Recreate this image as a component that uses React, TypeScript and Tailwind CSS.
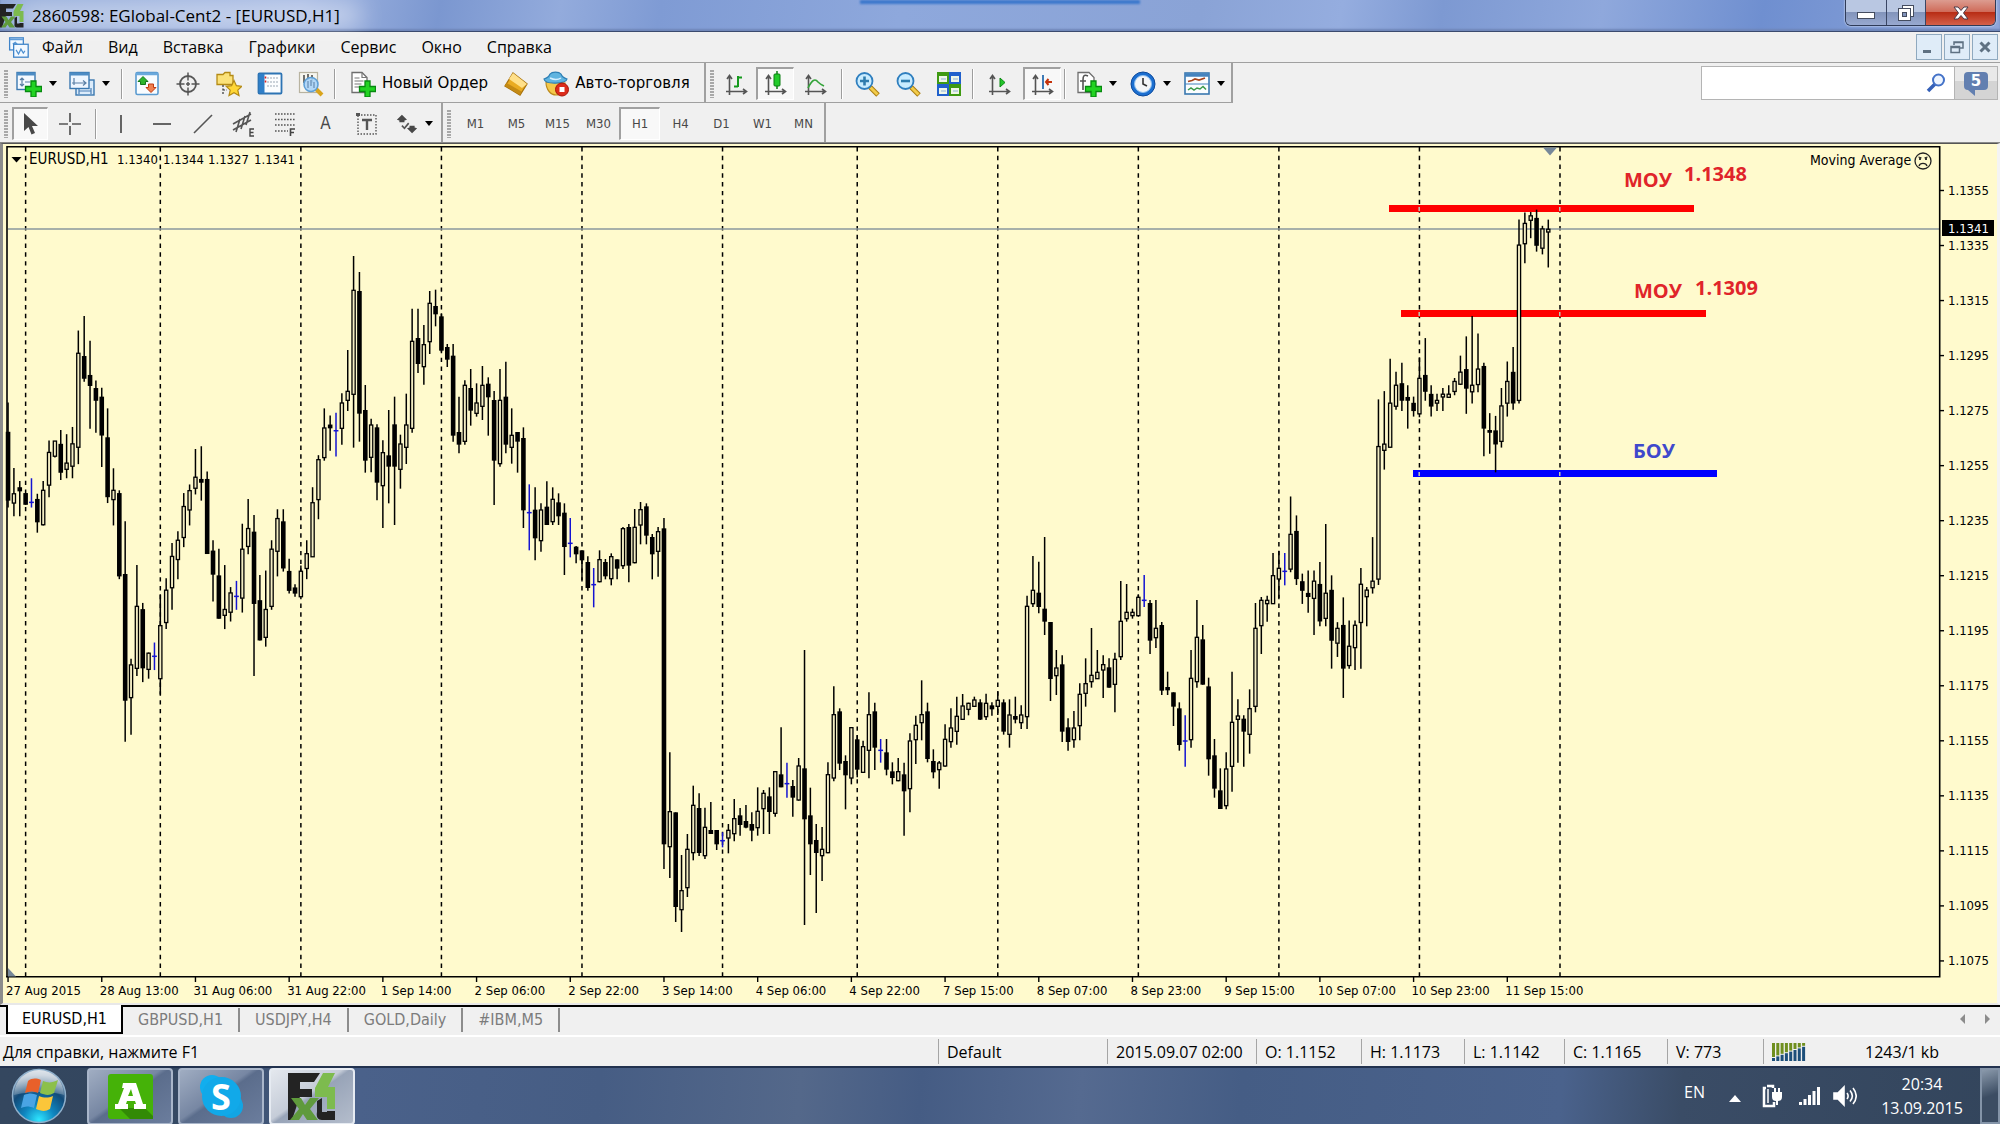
import type { ReactNode } from "react";

const COND = "font-['DejaVu_Sans_Condensed','DejaVu_Sans',sans-serif]";
const UI = "font-['Open_Sans','Noto_Sans',sans-serif]";

/* ------------------------------------------------------------------ */
/* Chart data                                                          */
/* ------------------------------------------------------------------ */

type Segment = { first: number; top: number; unit: number; bars: string };

// Each bar: kind bodyTop bodyBottom high low  (w = rising, b = falling, d = doji)
const SEGMENTS: Segment[] = [
  {
    first: 0,
    top: 220,
    unit: 2.904,
    bars: `b 615 815 530 835|w 795 822 720 860|b 776 788 758 860|b 793 827 793 827|d 820 820 750 835|b 810 878 795 908|w 785 885 758 887|w 675 770 640 805|w 642 686 642 690|b 650 734 610 755|w 706 724 622 750|w 650 715 601 750|w 387 660 321 709|b 395 461 279 470|b 450 482 351 606|b 488 525 466 618|b 513 626 487 717|b 631 805 547 822|w 785 812 721 887|b 793 1035 785 1043|b 1028 1396 875 1515|w 1292 1387 1274 1495|w 1122 1302 1002 1324|b 1130 1302 1112 1342|w 1258 1305 1256 1332|d 1267 1267 1227 1307|w 1178 1332 1087 1378|w 1075 1169 1040 1188|w 977 1068 938 1132|w 930 986 904 1043|w 832 922 793 950|w 786 842 768 887|w 747 779 665 797|b 752 763 657 815|b 752 970 730 970|b 960 1030 930 1108|b 1032 1158 955 1158|w 1131 1148 1002 1188|w 1083 1139 1066 1166|d 1093 1093 1048 1132|w 956 1098 882 1140|w 896 948 810 971|b 905 1115 857 1324|b 1104 1221 1031 1221|w 1131 1212 1018 1239|w 956 1122 930 1132|w 867 962 840 1035|b 875 1012 840 1021|b 1019 1077 984 1085|b 1067 1085 1058 1094|w 1020 1094 1003 1094|w 969 1012 930 1043|w 821 978 776 978|w 696 812 683 869|w 604 690 547 699|b 594 605 568 670|d 612 612 560 687`,
  },
  {
    first: 57,
    top: 220,
    unit: 3,
    bars: `w 549 625 520 674|w 514 541 390 573|w 211 523 108 683|b 213 581 156 665|b 570 722 495 758|w 615 712 596 757|b 622 788 613 841|w 698 797 661 924|b 706 740 570 850|b 613 740 530 915|w 672 748 644 806|w 615 682 521 732|w 364 625 266 638|b 354 432 266 459|w 374 440 315 494|w 250 365 213 402|b 258 283 209 319|b 289 392 280 395|b 381 419 372 441|b 407 647 372 665|b 636 674 530 700|w 496 664 481 674|b 504 572 447 617|w 549 580 490 590|w 496 559 438 600|b 491 532 472 647|b 540 722 513 855|w 541 731 447 740|b 530 674 425 700|w 646 682 565 731|b 636 665 636 758|b 654 871 622 924|d 878 878 793 991|b 869 955 802 1021|w 870 962 850 995|b 860 915 784 915|w 838 905 802 915|b 847 889 820 915|b 878 981 850 1065|d 970 970 894 1012|b 980 1003 978 1030|b 991 1021 991 1080|b 1026 1104 1009 1112|d 1094 1094 1044 1162`,
  },
  {
    first: 101,
    top: 440,
    unit: 3,
    bars: `w 359 425 331 427|b 366 409 357 418|w 350 416 340 436|b 358 386 358 418|w 266 377 261 387|b 261 377 252 427|w 262 368 207 370|w 209 255 186 313|b 199 287 190 313|b 291 343 282 418|w 275 334 261 410|b 265 1213 234 1287|w 1115 1220 937 1314|b 1117 1401 1117 1446|w 1352 1409 1245 1476|w 1228 1343 1182 1371|w 1096 1238 1037 1261|b 1104 1239 1060 1248|w 1162 1247 1103 1257|b 1170 1182 1086 1182|b 1170 1213 1170 1230|d 1202 1202 1177 1222|w 1171 1194 1152 1240|w 1136 1181 1077 1204|b 1126 1155 1104 1187|b 1143 1163 1095 1165|b 1152 1172 1117 1204|w 1114 1163 1042 1187|w 1060 1106 1050 1182|b 1069 1116 1042 1182|w 995 1120 993 1130|b 1003 1042 862 1042|d 1031 1031 968 1073|b 1038 1073 1020 1130|w 978 1080 954 1082|b 985 1138 630 1455|b 1126 1213 1043 1305|b 1200 1239 1152 1419|w 1228 1247 1161 1323|w 1004 1238 967 1240|w 824 1014 739 1024|b 814 971 805 990|b 963 1006 946 1108|w 863 1014 862 1033|b 898 989 885 1012|w 920 997 902 998|w 824 931 757 1015|b 814 923 788 990|d 931 931 897 968|b 937 989 897 1006|b 994 1014 967 1033|w 995 1022 954 1024|b 1003 1054 968 1187|w 903 1046 880 1117|w 856 899 827 972|w 824 848 721 901|b 814 957 788 967|b 963 997 928 1015|w 969 989 963 1046|w 898 978 853 980|w 864 905 805 923|w 829 874 770 914|w 798 838 762 839|w 790 808 788 826|w 780 799 770 801`,
  },
  {
    first: 166,
    top: 500,
    unit: 3,
    bars: `b 607 659 598 660|w 610 650 581 660|b 616 628 607 647|w 601 619 574 645|b 607 695 598 704|w 645 703 598 743|b 648 659 590 670|w 645 668 616 687|w 319 650 287 687|w 271 311 168 321|b 278 321 185 340|b 326 365 111 405|b 366 537 366 603|w 504 527 450 585|b 493 695 466 726|b 682 726 655 752|w 684 719 633 743|w 583 677 550 721|w 551 580 475 620|w 526 545 384 563|w 517 536 450 537|w 494 510 466 594|b 502 563 475 563|w 478 553 458 637|w 364 470 243 480|w 337 356 252 365|w 337 347 326 356|w 292 347 283 347|d 301 301 225 321|b 309 422 300 462|w 385 413 300 444|b 375 572 366 585|b 561 571 515 585|b 577 620 577 678|b 625 735 607 752|d 723 723 646 800|w 535 719 450 743|w 412 545 300 563|b 418 554 375 554|b 559 778 533 827|b 766 866 717 893|b 871 927 805 927|w 807 917 757 928|w 667 799 515 875|w 648 658 598 788|b 656 695 646 800|w 626 703 568 761|w 385 619 309 637|w 301 377 291 462|w 301 311 287 365|w 227 311 159 312|w 205 237 152 294|d 214 214 159 256`,
  },
  {
    first: 219,
    top: 190,
    unit: 2.904,
    bars: `w 1000 1101 890 1110|b 990 1130 945 1147|b 1136 1164 1114 1202|b 1170 1182 1105 1228|w 1136 1186 1105 1292|b 1144 1253 1080 1267|w 1171 1244 970 1267|b 1161 1309 1119 1390|w 1273 1316 1255 1356|b 1263 1390 1183 1475|w 1325 1381 1250 1390|w 1264 1329 1250 1394|w 1145 1256 1098 1390|w 1162 1181 1153 1267|w 1136 1155 1008 1172|w 745 1130 608 1147|w 738 756 584 812|w 619 747 490 748|w 567 628 528 638|b 561 612 502 642|b 601 612 567 693|b 618 642 600 658|w 547 650 486 660|b 537 586 430 612|b 592 629 567 658|w 611 619 592 642|w 593 601 575 642|w 593 602 567 603|w 556 585 546 596|w 529 564 481 566|b 520 577 425 650|w 567 586 366 620|w 520 565 417 587|b 511 693 502 773|b 697 705 648 766|b 698 739 656 820|w 627 730 575 748|w 556 619 498 658|b 528 620 456 638|w 160 611 86 620|w 97 156 65 213|w 75 88 64 140|b 81 162 57 179|w 113 169 104 187|w 114 122 86 225`,
  },
];

const PX = 1.4641;
const barX = (k: number) => (5.5 + 4 * k) * PX;

const BARS = SEGMENTS.flatMap((s) =>
  s.bars.split("|").map((row, i) => {
    const [kind, a, b, h, l] = row.trim().split(" ");
    const y = (v: string) => s.top + Number(v) / s.unit;
    return { kind, x: barX(s.first + i), t: y(a), b: y(b), h: y(h), l: y(l) };
  }),
);

const DAY_BARS = [3, 26, 50, 74, 98, 122, 145, 169, 193, 217, 241, 265];

const DATES = [
  "27 Aug 2015", "28 Aug 13:00", "31 Aug 06:00", "31 Aug 22:00", "1 Sep 14:00", "2 Sep 06:00",
  "2 Sep 22:00", "3 Sep 14:00", "4 Sep 06:00", "4 Sep 22:00", "7 Sep 15:00", "8 Sep 07:00",
  "8 Sep 23:00", "9 Sep 15:00", "10 Sep 07:00", "10 Sep 23:00", "11 Sep 15:00",
];

const PRICES = [
  "1.1355", "1.1335", "1.1315", "1.1295", "1.1275", "1.1255", "1.1235", "1.1215",
  "1.1195", "1.1175", "1.1155", "1.1135", "1.1115", "1.1095", "1.1075",
];

const LEVELS = [
  { x1: 1389, x2: 1694, y: 205, color: "#ff0000" },
  { x1: 1401, x2: 1706, y: 310, color: "#ff0000" },
  { x1: 1413, x2: 1717, y: 470, color: "#0000ff" },
];

function Chart() {
  return (
    <svg viewBox="3 144 1994 859" className={`block h-auto w-full bg-[#fffacd] text-[13px] ${COND}`} role="img" aria-label="EURUSD,H1">
      {DAY_BARS.map((k) => (
        <line key={k} x1={barX(k)} x2={barX(k)} y1={147} y2={976} stroke="#000" strokeWidth={1.5} strokeDasharray="4.39 4.39" />
      ))}
      <line x1={8} x2={1940} y1={229} y2={229} stroke="#8a979c" strokeWidth={1.6} />
      {LEVELS.map((l) => (
        <g key={l.y}>
          <rect x={l.x1} y={l.y} width={l.x2 - l.x1} height={7} fill={l.color} />
          {DAY_BARS.map(barX)
            .filter((x) => x > l.x1 && x < l.x2)
            .map((x) => (
              <rect key={x} x={x - 1} y={l.y + 2} width={1.5} height={4} fill="#bfc4b4" />
            ))}
        </g>
      ))}
      {BARS.map((c) => {
        const color = c.kind === "d" ? "#1414d2" : "#000";
        return (
          <g key={c.x}>
            <line x1={c.x} x2={c.x} y1={c.h} y2={c.l} stroke={color} strokeWidth={1.5} />
            {c.kind === "d" && <line x1={c.x - 2.4} x2={c.x + 2.4} y1={c.t} y2={c.t} stroke={color} strokeWidth={1.5} />}
            {c.kind === "b" && <rect x={c.x - 2.3} y={c.t} width={4.6} height={Math.max(c.b - c.t, 2)} fill="#000" />}
            {c.kind === "w" && (
              <rect x={c.x - 1.6} y={c.t} width={3.2} height={Math.max(c.b - c.t, 2)} fill="#f3edc3" stroke="#000" strokeWidth={1.3} />
            )}
          </g>
        );
      })}
      <path d="M7 977V146.7H1939.7V976.7H6" fill="none" stroke="#000" strokeWidth={1.6} />
      <path d="M1543 147.500h14l-7 8z" fill="#778899" />
      <path d="M8 968v8.500h8z" fill="#778899" />
      <path d="M11.500 157h10l-5 5.500z" fill="#000" />
      <text x={29} y={164} className="text-[15px]">EURUSD,H1</text>
      <text x={117} y={164}>1.1340</text>
      <text x={163} y={164}>1.1344</text>
      <text x={208} y={164}>1.1327</text>
      <text x={254} y={164}>1.1341</text>
      <text x={1810} y={165} className="text-[14px]">Moving Average</text>
      <g fill="none" stroke="#222" strokeWidth={1.3}>
        <circle cx={1923} cy={161} r={8} />
        <path d="M1919 166c1-3.500 7-3.500 8 0M1918.500 157l3 1M1927.500 157l-3 1" />
        <path d="M1920 158v2M1926 158v2" strokeWidth={1.8} />
      </g>
      <g className="font-['Open_Sans'] text-[20px] font-bold" fill="#e0242a">
        <text x={1624} y={187}>МОУ</text>
        <text x={1684} y={181}>1.1348</text>
        <text x={1634} y={298}>МОУ</text>
        <text x={1695} y={295}>1.1309</text>
        <text x={1633} y={458} fill="#3f48cc">БОУ</text>
      </g>
      {PRICES.map((p, i) => (
        <g key={p}>
          <line x1={1940} x2={1944} y1={190.5 + i * 55.03} y2={190.5 + i * 55.03} stroke="#000" strokeWidth={1.4} />
          <text x={1948} y={195 + i * 55.03}>{p}</text>
        </g>
      ))}
      <rect x={1942} y={220} width={52} height={16} fill="#000" />
      <text x={1948} y={233} fill="#fff">1.1341</text>
      {DATES.map((d, i) => (
        <g key={d}>
          <line x1={barX(i * 16)} x2={barX(i * 16)} y1={977} y2={982} stroke="#000" strokeWidth={1.4} />
          <text x={barX(i * 16) - 2} y={995}>{d}</text>
        </g>
      ))}
    </svg>
  );
}

/* ------------------------------------------------------------------ */
/* Icons                                                               */
/* ------------------------------------------------------------------ */

function Ico({ children, size = "size-[26px]", box = "0 0 26 26" }: { children: ReactNode; size?: string; box?: string }) {
  return (
    <svg viewBox={box} className={`${size} shrink-0`} fill="none" aria-hidden="true">
      {children}
    </svg>
  );
}

const PLUS = "M15 10h5v5.500h5.500v5h-5.500v5.500h-5v-5.500h-5.500v-5h5.500z";
const Plus = () => <path d={PLUS} fill="#22d322" stroke="#078a10" strokeWidth="1.3" />;

const NewChart = () => (
  <Ico>
    <rect x="1" y="1.500" width="18" height="17" fill="#f4f9ff" stroke="#3a78b0" strokeWidth="1.4" />
    <path d="M1 3h18" stroke="#4d8cc4" strokeWidth="3" />
    <path d="M6 7v8M4 9l2-2 2 2M4 13l2 2 2-2M9 11h5" stroke="#5a7fa5" strokeWidth="1.2" />
    <Plus />
  </Ico>
);
const Profiles = () => (
  <Ico>
    <rect x="7" y="9" width="18" height="15" fill="#dcecfb" stroke="#3a78b0" strokeWidth="1.4" />
    <path d="M10 20h12M10 17v6M22 17l0 6" stroke="#4a7fb5" strokeWidth="1.2" />
    <rect x="1" y="1.500" width="19" height="16" fill="#eef6ff" stroke="#3a78b0" strokeWidth="1.4" />
    <path d="M1 3h19" stroke="#4d8cc4" strokeWidth="3" />
    <path d="M5 7v7M3 12h14M14 9.500l3 2.500-3 2.500" stroke="#5a7fa5" strokeWidth="1.2" />
  </Ico>
);
const MarketWatch = () => (
  <Ico>
    <rect x="2" y="1.500" width="22" height="22" rx="1.500" fill="#f8fcff" stroke="#5b9bd0" strokeWidth="1.6" />
    <path d="M2 3h22" stroke="#6aa9dc" strokeWidth="2.500" />
    <path d="M9 5.500l5 5h-2.500v3h-5v-3H4z" fill="#2db52d" stroke="#14791a" />
    <path d="M17 21.500l5-5h-2.500v-3.500h-5v3.500H12z" fill="#f08050" stroke="#c03a10" />
  </Ico>
);
const Crosshairs = () => (
  <Ico>
    <circle cx="13" cy="13" r="8" stroke="#555" strokeWidth="1.800" />
    <path d="M13 1.500v8M13 16.500v8M1.500 13h8M16.500 13h8M11 13h4M13 11v4" stroke="#555" strokeWidth="1.500" />
  </Ico>
);
const STAR = "M18 9.500l2.400 5.200 5.400.6-4 3.800 1.200 5.500-5-2.800-5 2.800 1.200-5.500-4-3.800 5.400-.6z";
const Navigator = () => (
  <Ico>
    <path d="M1 3.500h6l2-2h5v3h3v9H1z" fill="#fbe27a" stroke="#b48a14" strokeWidth="1.300" />
    <path d="M7 14v10M7 19h4" stroke="#333" strokeWidth="1.200" strokeDasharray="2 1.500" />
    <path d={STAR} fill="#ffd735" stroke="#b48a14" strokeWidth="1.200" />
  </Ico>
);
const Terminal = () => (
  <Ico>
    <rect x="1.500" y="2.500" width="23" height="20" rx="1" fill="#fbfdff" stroke="#2d74b4" strokeWidth="1.800" />
    <rect x="2" y="3" width="5.500" height="19" fill="#2f7fc8" />
    <path d="M10 7h12M10 11h12M10 15h12" stroke="#9aa7b5" strokeDasharray="2 1" />
    <path d="M8.500 5.500v2M8.500 9.500v2" stroke="#d22" strokeWidth="1.600" />
  </Ico>
);
const Tester = () => (
  <Ico>
    <rect x="1.500" y="1.500" width="18" height="20" fill="#f7f6ef" stroke="#b8b3a0" strokeWidth="1.200" />
    <path d="M6 4v8M10 3v6M14 4v8" stroke="#444" strokeWidth="1.500" />
    <path d="M18 18l6 6" stroke="#d9a41c" strokeWidth="4" />
    <circle cx="13" cy="13.500" r="7" fill="#a9d4f7" fillOpacity=".9" stroke="#5d9fd6" strokeWidth="1.500" />
    <path d="M10 10v7M13 9v6M16 11v6" stroke="#6b92b8" strokeWidth="1.300" />
  </Ico>
);
const NewOrder = () => (
  <Ico>
    <path d="M2 1.500h10l5 5v15H2z" fill="#fff" stroke="#6e6e6e" strokeWidth="1.300" />
    <path d="M12 1.500v5h5M4.500 7h5M4.500 10h9M4.500 13h7M4.500 16h5" stroke="#777" strokeWidth="1.200" />
    <Plus />
  </Ico>
);
const Gold = () => (
  <Ico>
    <path d="M10 2l14 11-7 11L2 15z" fill="#e9ab22" stroke="#a8720c" strokeWidth="1.300" />
    <path d="M10 2l14 11-5 4L6 8z" fill="#ffe08a" />
    <path d="M2 15l15 9 1.500-3.500L3.500 12z" fill="#c48a14" />
  </Ico>
);
const Auto = () => (
  <Ico>
    <path d="M3 11c0 8 5 13 10 13s9-5 9-12z" fill="#f4c84a" stroke="#bd8a1a" strokeWidth="1.200" />
    <path d="M1 8c3-1 5-2 6-5 2-2.500 9-2.500 11 0 1 3 3 4 6 5-1 5-22 6-23 0z" fill="#5fb4e0" stroke="#2d7fb5" strokeWidth="1.200" />
    <path d="M7 7c4 2 8 2 11 0" stroke="#d5efff" strokeWidth="1.500" />
    <circle cx="19" cy="18.500" r="6.500" fill="#dc2b1b" stroke="#a91508" />
    <rect x="16.500" y="16" width="5" height="5" fill="#fff" />
  </Ico>
);
const Axes = () => <path d="M5.500 24V5M3 8l2.500-3.500L8 8M2 20.500h20M19 18l3.500 2.500-3.500 2.500" stroke="#555" strokeWidth="1.600" />;
const BarChart = () => (
  <Ico>
    <Axes />
    <path d="M14 5v11M10 15.500h4M14 6.500h4" stroke="#159a1d" strokeWidth="2" />
  </Ico>
);
const CandleChart = () => (
  <Ico>
    <Axes />
    <path d="M14 0v18" stroke="#0b7d13" strokeWidth="1.500" />
    <rect x="11" y="3" width="6" height="12" rx="1" fill="#22cc2a" stroke="#0b7d13" />
  </Ico>
);
const LineChart = () => (
  <Ico>
    <Axes />
    <path d="M5 17c4-8 7-10 10-6 2 2 4 3 6 4" stroke="#34a43a" strokeWidth="1.600" />
  </Ico>
);
const AutoScroll = () => (
  <Ico>
    <Axes />
    <path d="M13 7l5 4.500-5 4.500z" fill="#22c42a" stroke="#0b8a13" />
  </Ico>
);
const Shift = () => (
  <Ico>
    <Axes />
    <path d="M13 4v14" stroke="#2a6cae" strokeWidth="1.800" />
    <path d="M16 11h6M18.500 8L16 11l2.500 3" stroke="#c4330c" strokeWidth="2" />
  </Ico>
);
const Zoom = ({ plus }: { plus?: boolean }) => (
  <Ico>
    <path d="M16 16l8 8" stroke="#a97c0e" strokeWidth="5" />
    <path d="M16.500 16.500l7 7" stroke="#f2cb4a" strokeWidth="3" />
    <circle cx="10.500" cy="10" r="8" fill="#c9ecff" stroke="#2f7fbf" strokeWidth="1.800" />
    <path d={plus ? "M6 10h9M10.500 5.500v9" : "M6 10h9"} stroke="#2e7cae" strokeWidth="2.600" />
  </Ico>
);
const Tile = () => (
  <Ico>
    <rect x="1" y="1" width="12" height="12" fill="#3f9a12" />
    <rect x="13" y="1" width="12" height="12" fill="#2060cc" />
    <rect x="1" y="13" width="12" height="12" fill="#2060cc" />
    <rect x="13" y="13" width="12" height="12" fill="#3f9a12" />
    <path d="M3 5h8v6H3zM15 5h8v6h-8zM3 17h8v6H3zM15 17h8v6h-8z" fill="#eef6e8" />
    <path d="M5 8h5M17 8h5M5 20h5M17 20h5" stroke="#8fb0d5" />
  </Ico>
);
const Indicators = () => (
  <Ico>
    <path d="M2 1.500h11l5 5v15H2z" fill="#fff" stroke="#6e6e6e" strokeWidth="1.300" />
    <path d="M12 5c-4-2-5 0-5 4v10M4 10h6" stroke="#555" strokeWidth="1.600" />
    <Plus />
  </Ico>
);
const Clock = () => (
  <Ico>
    <circle cx="13" cy="13" r="12" fill="#1c6fd0" stroke="#0d4a9c" />
    <circle cx="13" cy="13" r="8.500" fill="#f4f6f8" stroke="#8ec0f0" />
    <path d="M13 7v6l4 2" stroke="#333" strokeWidth="1.600" />
  </Ico>
);
const Template = () => (
  <Ico>
    <rect x="1" y="2" width="24" height="21" fill="#fbfdff" stroke="#3a78b0" strokeWidth="1.600" />
    <path d="M1 4h24" stroke="#4583be" strokeWidth="3.500" />
    <path d="M1 13h24" stroke="#4583be" />
    <path d="M4 10.500l4-1 3-1.500 4 1 6-2" stroke="#a8431b" strokeWidth="1.700" />
    <path d="M4 19l3-2 3 2 3-2 3 1 3-2.500 3 3" stroke="#3a9a4a" strokeWidth="1.500" />
  </Ico>
);

const Cursor = () => (
  <Ico>
    <path d="M6 2v18l4.500-4 3 7.500 3.500-1.500-3-7H20z" fill="#484848" />
  </Ico>
);
const Cross = () => (
  <Ico>
    <path d="M13 2v9M13 15v9M2 13h9M15 13h9" stroke="#555" strokeWidth="1.700" />
  </Ico>
);
const VLine = () => <Ico><path d="M13 4v18" stroke="#555" strokeWidth="1.800" /></Ico>;
const HLine = () => <Ico><path d="M4 13h18" stroke="#555" strokeWidth="1.800" /></Ico>;
const Slash = () => <Ico><path d="M4 22L22 4" stroke="#555" strokeWidth="1.600" /></Ico>;
const Channel = () => (
  <Ico>
    <path d="M2 13L20 3M2 19L20 9M5 21L9 8M10 18l4-13M15 14L19 1" stroke="#555" strokeWidth="1.600" />
    <path d="M23 18h-4v7h4M19 21.500h3.500" stroke="#444" strokeWidth="1.400" />
  </Ico>
);
const Fibo = () => (
  <Ico>
    <path d="M3 3h20M3 8.500h20M3 14h20M3 20h13" stroke="#555" strokeWidth="1.600" strokeDasharray="1.600 1.400" />
    <path d="M18.500 25v-7H23M18.500 21.500H22" stroke="#444" strokeWidth="1.600" />
  </Ico>
);
const TextLabel = () => (
  <Ico>
    <rect x="4" y="4" width="18" height="19" stroke="#555" strokeWidth="1.400" strokeDasharray="1.500 1.500" />
    <path d="M8 9h10M13 9v10" stroke="#555" strokeWidth="2.400" />
    <path d="M2 2h4v3H2z" fill="#555" />
  </Ico>
);
const Arrows = () => (
  <Ico size="size-[22px]">
    <path d="M7 2l6 6-3 1v2H4V9L1 8zM19 24l-6-6 3-1v-2h6v2l3 1z" fill="#484848" />
    <path d="M7 15l3 3 5-6" stroke="#555" strokeWidth="2" />
  </Ico>
);

const FxLogo = ({ size }: { size: string }) => (
  <svg viewBox="0 0 48 48" className={`${size} shrink-0`} aria-hidden="true">
    <path d="M0 0H32L26 9H12v7h12v8H12L0 46z" fill="#232323" />
    <path d="M0 24h9v8l-5 15H0z" fill="#232323" />
    <path d="M35 0h12L40 14h7v22h-8V24H27V15z" fill="#7dbb4e" />
    <path d="M3 25h10l4 7 5-7h9l-9 11 8 11H19l-4-6-4 6H2l9-11z" fill="#5f9a3c" />
    <path d="M29 28l5-3v14h5v-1h8v9H34c-4 0-6-3-5-8z" fill="#232323" />
  </svg>
);

/* ------------------------------------------------------------------ */
/* Toolbar parts                                                       */
/* ------------------------------------------------------------------ */

const Caret = () => <span className="h-0 w-0 border-x-4 border-t-[5px] border-x-transparent border-t-black" />;
const Grip = () => (
  <span className="mx-1 h-7 w-1 bg-[repeating-linear-gradient(#a8a8a8_0_2px,#f0f0f0_2px_3px)]" />
);
const Sep = () => <span className="mx-[3px] h-[30px] w-[2px] border-l border-[#9d9d9d] bg-white" />;

function Tool({ w, label, pressed, menu, children }: { w: string; label: string; pressed?: boolean; menu?: boolean; children: ReactNode }) {
  return (
    <button
      type="button"
      aria-label={label}
      aria-pressed={pressed}
      className={`${w} flex h-[33px] items-center justify-center gap-[7px] ${
        pressed ? "border-t-2 border-l-2 border-r border-b border-t-[#a0a0a0] border-l-[#a0a0a0] border-r-white border-b-white bg-[#f8f8f8]" : ""
      }`}
    >
      {children}
      {menu && <Caret />}
    </button>
  );
}

const BAR = "flex items-center border-r-2 border-r-[#a0a0a0] pt-[2px]";

const MENU = ["Файл", "Вид", "Вставка", "Графики", "Сервис", "Окно", "Справка"];
const FRAMES = ["M1", "M5", "M15", "M30", "H1", "H4", "D1", "W1", "MN"];
const TABS = ["GBPUSD,H1", "USDJPY,H4", "GOLD,Daily", "#IBM,M5"];

function TitleBar() {
  return (
    <header className="relative flex h-8 items-start justify-between border-b border-[#3b4a6e] bg-[linear-gradient(100deg,#8fa8d8_0%,#a3b7e2_15%,#7b97d0_22%,#93abdc_28%,#7f9bd4_33%,#8ea8dc_45%,#8aa3d6_60%,#95addf_67%,#7d99d2_72%,#8fa8dc_80%,#6f8fd0_88%,#8fa6da_100%)] shadow-[inset_0_-2px_2px_#6f86b8]">
      <div className="absolute left-[43%] top-0 h-1 w-[14%] bg-[#3b77cc] blur-[1px]" />
      <div className="relative flex h-[31px] items-center gap-2 pr-5">
        <div className="absolute inset-y-1 left-4 right-0 bg-white/50 blur-md" />
        <span className="relative"><FxLogo size="size-6" /></span>
        <h1 className={`relative text-[17px] leading-[30px] text-black ${UI}`}>2860598: EGlobal-Cent2 - [EURUSD,H1]</h1>
      </div>
      <div className="relative mr-1 flex h-[26px] overflow-hidden rounded-b-md border border-t-0 border-[#2f3b58] shadow-[0_0_2px_#fff]">
        <button type="button" aria-label="Minimize" className="flex w-[41px] items-end justify-center border-r border-[#3a4664] bg-[linear-gradient(#b9c7e2_50%,#8294bb_50%,#98a9d0)] pb-[6px]">
          <span className="h-[7px] w-[18px] border border-[#444c5f] bg-white" />
        </button>
        <button type="button" aria-label="Restore" className="flex w-[39px] items-center justify-center border-r border-[#3a4664] bg-[linear-gradient(#b9c7e2_50%,#8294bb_50%,#98a9d0)]">
          <svg viewBox="0 0 18 18" className="size-[18px]" fill="none">
            <rect x="5.500" y="1.500" width="11" height="11" fill="#fff" stroke="#444c5f" />
            <rect x="1.500" y="4.500" width="12" height="12" fill="#fff" stroke="#444c5f" />
            <rect x="5.500" y="8.500" width="4" height="4" fill="#8294bb" stroke="#444c5f" />
          </svg>
        </button>
        <button type="button" aria-label="Close" className="flex w-[69px] items-center justify-center bg-[linear-gradient(#dc9c90_0%,#cf6a58_48%,#b82d15_50%,#d4604a_100%)]">
          <svg viewBox="0 0 18 16" className="h-4 w-[18px]">
            <path d="M2 2h4l3 3.500L12 2h4l-4.500 6 4.500 6h-4l-3-3.500L6 14H2l4.500-6z" fill="#fff" stroke="#4b3b48" />
          </svg>
        </button>
      </div>
    </header>
  );
}

const MDI = "flex size-[26px] items-center justify-center border border-[#8fa9bf] bg-[#dfecf8] text-[#5f7182]";

function MenuBar() {
  return (
    <div className="flex h-[31px] items-center justify-between border-b border-[#a0a0a0] pr-[2px]">
      <nav className={`flex items-center gap-[25px] pl-2 text-[16px] text-black ${UI}`}>
        <span className="-mr-3">
          <Ico size="size-[21px]">
            <rect x="2" y="1" width="17" height="15" fill="#f3f9ff" stroke="#3e83c8" strokeWidth="1.600" />
            <path d="M2 3h17M6 9l3-2 3 3" stroke="#5b9ad8" strokeWidth="2" />
            <rect x="7" y="9" width="18" height="16" fill="#f3f9ff" stroke="#3e83c8" strokeWidth="1.600" />
            <path d="M10 16l3 5 3-6 3 5 2-3" stroke="#4d8fd0" strokeWidth="1.500" />
          </Ico>
        </span>
        {MENU.map((m) => (
          <button key={m} type="button">{m}</button>
        ))}
      </nav>
      <div className="flex gap-[2px]">
        <button type="button" aria-label="Minimize chart" className={MDI}>
          <span className="mt-2 mr-1 h-[3px] w-2 bg-current" />
        </button>
        <button type="button" aria-label="Restore chart" className={MDI}>
          <svg viewBox="0 0 14 14" className="size-[14px]" fill="none" stroke="currentColor" strokeWidth="1.500">
            <path d="M4 5V2h9v6h-3M4 2.500h9" />
            <path d="M1 6.500h8.500v6H1zM1 7.500h8" />
          </svg>
        </button>
        <button type="button" aria-label="Close chart" className={MDI}>
          <svg viewBox="0 0 12 12" className="size-3" stroke="currentColor" strokeWidth="3">
            <path d="M1.500 1.500l9 9M10.500 1.500l-9 9" />
          </svg>
        </button>
      </div>
    </div>
  );
}

function Toolbars() {
  return (
    <div className="border-b border-[#8a8a8a]">
      <div className="flex h-10 items-stretch justify-between pr-[2px]">
        <div className="flex border-b border-[#a0a0a0]">
          <div className={`${BAR} pr-1`}>
            <Grip />
            <Tool w="w-12" label="New chart" menu><NewChart /></Tool>
            <Tool w="w-[58px]" label="Profiles" menu><Profiles /></Tool>
            <Sep />
            <Tool w="w-[41px]" label="Market watch"><MarketWatch /></Tool>
            <Tool w="w-[41px]" label="Data window"><Crosshairs /></Tool>
            <Tool w="w-[41px]" label="Navigator"><Navigator /></Tool>
            <Tool w="w-[41px]" label="Terminal"><Terminal /></Tool>
            <Tool w="w-[41px]" label="Strategy tester"><Tester /></Tool>
            <Sep />
            <button type="button" className="flex h-[33px] w-[160px] items-center justify-center gap-[6px] font-['DejaVu_Sans'] text-[15px]">
              <NewOrder />Новый Ордер
            </button>
            <Tool w="w-[34px]" label="MetaEditor"><Gold /></Tool>
            <button type="button" className="flex h-[33px] w-[167px] items-center justify-center gap-[6px] font-['DejaVu_Sans'] text-[15px]">
              <Auto />Авто-торговля
            </button>
          </div>
          <div className={BAR}>
            <Grip />
            <Tool w="w-[38px]" label="Bar chart"><BarChart /></Tool>
            <Tool w="w-[38px]" label="Candlesticks" pressed><CandleChart /></Tool>
            <Tool w="w-11" label="Line chart"><LineChart /></Tool>
            <Sep />
            <Tool w="w-[41px]" label="Zoom in"><Zoom plus /></Tool>
            <Tool w="w-[41px]" label="Zoom out"><Zoom /></Tool>
            <Tool w="w-[41px]" label="Tile windows"><Tile /></Tool>
            <Sep />
            <Tool w="w-[46px]" label="Auto scroll"><AutoScroll /></Tool>
            <Tool w="w-[38px]" label="Chart shift" pressed><Shift /></Tool>
            <Sep />
            <Tool w="w-[54px]" label="Indicators" menu><Indicators /></Tool>
            <Tool w="w-[54px]" label="Periods" menu><Clock /></Tool>
            <Tool w="w-[54px]" label="Templates" menu><Template /></Tool>
          </div>
        </div>
        <div className="mt-[3px] flex h-[34px] border border-[#b4b4b4]">
          <label className="flex w-[252px] items-center bg-white pr-1">
            <input type="text" aria-label="Search" className="h-full min-w-0 flex-1 bg-white px-2 outline-none" />
            <svg viewBox="0 0 20 20" className="mr-1 size-5" fill="none">
              <path d="M2 18l7-7" stroke="#3560b8" strokeWidth="3.500" />
              <circle cx="12.500" cy="7" r="5.500" fill="#eef5ff" stroke="#4472c8" strokeWidth="2" />
            </svg>
          </label>
          <button type="button" aria-label="5 messages" className="flex w-[43px] items-center justify-center border-l border-[#b4b4b4] bg-[linear-gradient(#e9e9e9_45%,#d4d4d4_45%)]">
            <span className="relative mb-1 flex h-[18px] w-6 items-center justify-center rounded-sm bg-[#627fb0] font-['DejaVu_Sans'] text-[15px] leading-none font-bold text-white">
              5
              <span className="absolute top-full left-1 h-0 w-0 border-t-[6px] border-l-[7px] border-t-[#627fb0] border-l-transparent" />
            </span>
          </button>
        </div>
      </div>
      <div className={`flex h-[39px] items-stretch text-[13px] text-[#484848] ${COND}`}>
        <div className={BAR}>
          <Grip />
          <Tool w="w-9" label="Cursor" pressed><Cursor /></Tool>
          <Tool w="w-11" label="Crosshair"><Cross /></Tool>
          <Sep />
          <Tool w="w-[41px]" label="Vertical line"><VLine /></Tool>
          <Tool w="w-[41px]" label="Horizontal line"><HLine /></Tool>
          <Tool w="w-[41px]" label="Trendline"><Slash /></Tool>
          <Tool w="w-[41px]" label="Channel"><Channel /></Tool>
          <Tool w="w-[41px]" label="Fibonacci"><Fibo /></Tool>
          <Tool w="w-[41px]" label="Text"><span className="text-[17px]">A</span></Tool>
          <Tool w="w-[41px]" label="Text label"><TextLabel /></Tool>
          <Tool w="w-[54px]" label="Arrows" menu><Arrows /></Tool>
        </div>
        <div className={BAR}>
          <Grip />
          {FRAMES.map((f) => (
            <Tool key={f} w="w-[41px]" label={f} pressed={f === "H1"}>{f}</Tool>
          ))}
        </div>
      </div>
    </div>
  );
}

function ChartTabs() {
  return (
    <div className={`flex h-[30px] items-start justify-between border-t-2 border-black pl-[6px] text-[16px] text-[#7c7c7c] ${COND}`}>
      <div className="flex h-[27px] items-center">
        <button type="button" className="-mt-[2px] flex h-[29px] w-[117px] items-center justify-center border-2 border-t-0 border-black bg-white text-black">
          EURUSD,H1
        </button>
        {TABS.map((t) => (
          <button key={t} type="button" className="-mt-[2px] flex h-6 items-center border-r-2 border-[#8c8c8c] pr-[15px] pl-[15px] leading-none">
            {t}
          </button>
        ))}
      </div>
      <div className="flex h-[24px] items-center gap-5 pr-[10px]">
        <button type="button" aria-label="Previous tab" className="h-0 w-0 border-y-[5px] border-r-[5px] border-y-transparent border-r-[#8c8c8c]" />
        <button type="button" aria-label="Next tab" className="h-0 w-0 border-y-[5px] border-l-[5px] border-y-transparent border-l-[#8c8c8c]" />
      </div>
    </div>
  );
}

const CELL = "flex h-[25px] items-center border-l border-[#a5a5a5] pl-2";

function StatusBar() {
  return (
    <footer className={`flex h-[31px] items-center border-t-2 border-white text-[16px] text-black ${UI}`}>
      <span className="flex-1 pl-[3px]">Для справки, нажмите F1</span>
      <span className={`${CELL} w-[169px]`}>Default</span>
      <span className={`${CELL} w-[149px]`}>2015.09.07 02:00</span>
      <span className={`${CELL} w-[105px]`}>O: 1.1152</span>
      <span className={`${CELL} w-[103px]`}>H: 1.1173</span>
      <span className={`${CELL} w-[100px]`}>L: 1.1142</span>
      <span className={`${CELL} w-[103px]`}>C: 1.1165</span>
      <span className={`${CELL} w-[96px]`}>V: 773</span>
      <span className={`${CELL} w-[237px] justify-between pr-[61px]`}>
        <svg viewBox="0 0 34 18" className="h-[18px] w-[34px]">
          {[0, 1, 2, 3, 4, 5, 6, 7].map((i) => (
            <g key={i}>
              <rect x={i * 4.3} y={0} width={3} height={14 - i * 1.6} fill="#6f8f1f" />
              <rect x={i * 4.3} y={15 - i * 1.6} width={3} height={3 + i * 1.6} fill="#1c4f7a" />
            </g>
          ))}
        </svg>
        1243/1 kb
      </span>
    </footer>
  );
}

const TASK = "flex h-[57px] w-[86px] items-center justify-center rounded-[4px] border-2";

function Taskbar() {
  return (
    <div className={`flex h-[58px] items-start justify-between border-t-2 border-[#22324f] bg-[linear-gradient(95deg,#34475f_0%,#33465f_8%,#4a618a_18%,#465d84_30%,#54688a_40%,#455c84_46%,#556a90_54%,#455d85_62%,#4a628c_78%,#3a4c66_84%,#33455c_100%)] text-white ${UI}`}>
      <div className="flex items-start gap-[5px]">
        <button type="button" aria-label="Start" className="mr-[15px] ml-[11px]">
          <svg viewBox="0 0 56 56" className="size-14">
            <defs>
              <radialGradient id="orb" cx="50%" cy="95%" r="85%">
                <stop offset="0" stopColor="#2fe6ff" />
                <stop offset=".35" stopColor="#0f86c0" />
                <stop offset=".7" stopColor="#124a78" />
                <stop offset="1" stopColor="#7f97b0" />
              </radialGradient>
              <linearGradient id="shine" x1="0" y1="0" x2="0" y2="1">
                <stop offset="0" stopColor="#fff" stopOpacity=".75" />
                <stop offset="1" stopColor="#fff" stopOpacity=".2" />
              </linearGradient>
            </defs>
            <circle cx="28" cy="28" r="26.500" fill="url(#orb)" stroke="#8fb0cc" strokeWidth="1.500" />
            <path d="M3 27a25 25 0 0 1 50 0c-12-4-36-4-50 0z" fill="url(#shine)" />
            <path d="M17 13c4-3 8-3 13-1l-3 13c-5-2-9-2-13 0z" fill="#e8602a" />
            <path d="M32 13c5 2 9 2 15-1l-4 13c-5 3-9 2-14 0z" fill="#8cc04a" />
            <path d="M13 27c5-2 9-2 13 0l-3 13c-5-2-9-2-13 0z" fill="#4aa4e4" />
            <path d="M28 28c5 2 9 2 14 0l-3 13c-5 3-9 2-14 0z" fill="#fbc63a" />
          </svg>
        </button>
        <button type="button" aria-label="Browser" className={`${TASK} border-[#a9b6ca] bg-[linear-gradient(145deg,#a0adc2_0%,#7787a3_45%,#5b6d8c_50%,#6b7d9d_100%)]`}>
          <svg viewBox="0 0 45 45" className="size-[45px]">
            <rect width="45" height="45" rx="3" fill="#45b208" />
            <path d="M37 34l8 8v3H22L11 34z" fill="#328a05" />
            <path d="M15 9h13l7 21h3v5H26v-5h2l-1-3h-8l-1 3h2v5H7v-5h3l6-16h-2zM20 22h5l-2-7z" fill="#fff" fillRule="evenodd" />
          </svg>
        </button>
        <button type="button" aria-label="Skype" className={`${TASK} border-[#a9b6ca] bg-[linear-gradient(145deg,#a0adc2_0%,#7787a3_45%,#5b6d8c_50%,#6b7d9d_100%)]`}>
          <span className="relative flex size-[45px] items-center justify-center">
            <svg viewBox="0 0 45 45" className="absolute inset-0">
              <circle cx="13" cy="13" r="12" fill="#11aeee" />
              <circle cx="32" cy="32" r="12" fill="#11a5e4" />
              <circle cx="22.500" cy="22.500" r="19.500" fill="#11a9e9" />
            </svg>
            <span className="relative text-[36px] leading-none font-bold">S</span>
          </span>
        </button>
        <button type="button" aria-label="EGlobal-Cent2" className={`${TASK} border-[#e6ebf2] bg-[linear-gradient(145deg,#e4e8ee_0%,#c5ccd8_45%,#98a4b8_50%,#b4bdcc_100%)]`}>
          <FxLogo size="size-12" />
        </button>
      </div>
      <div className="flex h-full items-center">
        <span className="mr-6 mb-2 text-[16px]">EN</span>
        <button type="button" aria-label="Show hidden icons" className="mt-1 mr-5 h-0 w-0 border-x-[6px] border-b-[7px] border-x-transparent border-b-white" />
        <svg viewBox="0 0 22 24" className="mr-4 h-6 w-[22px]" fill="none">
          <path d="M5 4H3v18h10v-4M6 2h6v2" stroke="#fff" strokeWidth="2.500" />
          <path d="M11 8h10v5c0 3-2 4-4 4v4h-2v-4c-2 0-4-1-4-4zM13 4h2v4h-2zM17 4h2v4h-2z" fill="#fff" />
          <path d="M7 5v14" stroke="#fff" strokeWidth="1.500" />
        </svg>
        <svg viewBox="0 0 22 18" className="mr-3 h-[18px] w-[22px]" fill="#fff">
          <path d="M0 15h3v3H0zM4.500 12h3v6h-3zM9 8h3v10H9zM13.500 4h3v14h-3zM18 0h3v18h-3z" />
        </svg>
        <svg viewBox="0 0 24 22" className="mr-6 h-[22px] w-6" fill="none" stroke="#fff" strokeWidth="1.600">
          <path d="M1 8h4l6-6v18l-6-6H1z" fill="#fff" />
          <path d="M14 8c1.500 2 1.500 4 0 6M17 5.500c3 3.500 3 7.500 0 11M20 3c4 5 4 11 0 16" />
        </svg>
        <div className="mr-[17px] w-[82px] text-center text-[16px] leading-6">
          <div>20:34</div>
          <div>13.09.2015</div>
        </div>
        <button type="button" aria-label="Show desktop" className="h-full w-5 border-2 border-[#8494a8] bg-[linear-gradient(160deg,#8a99ab,#3c4d63_50%)]" />
      </div>
    </div>
  );
}

export default function App() {
  return (
    <div className="flex min-h-screen w-full flex-col bg-[#f0f0f0] text-black">
      <TitleBar />
      <MenuBar />
      <Toolbars />
      <main className="border-t border-r-[3px] border-b-2 border-l-[3px] border-t-[#555] border-r-[#f4f4f4] border-b-[#e8e8e8] border-l-[#8c8c8c]">
        <Chart />
      </main>
      <ChartTabs />
      <StatusBar />
      <Taskbar />
    </div>
  );
}
